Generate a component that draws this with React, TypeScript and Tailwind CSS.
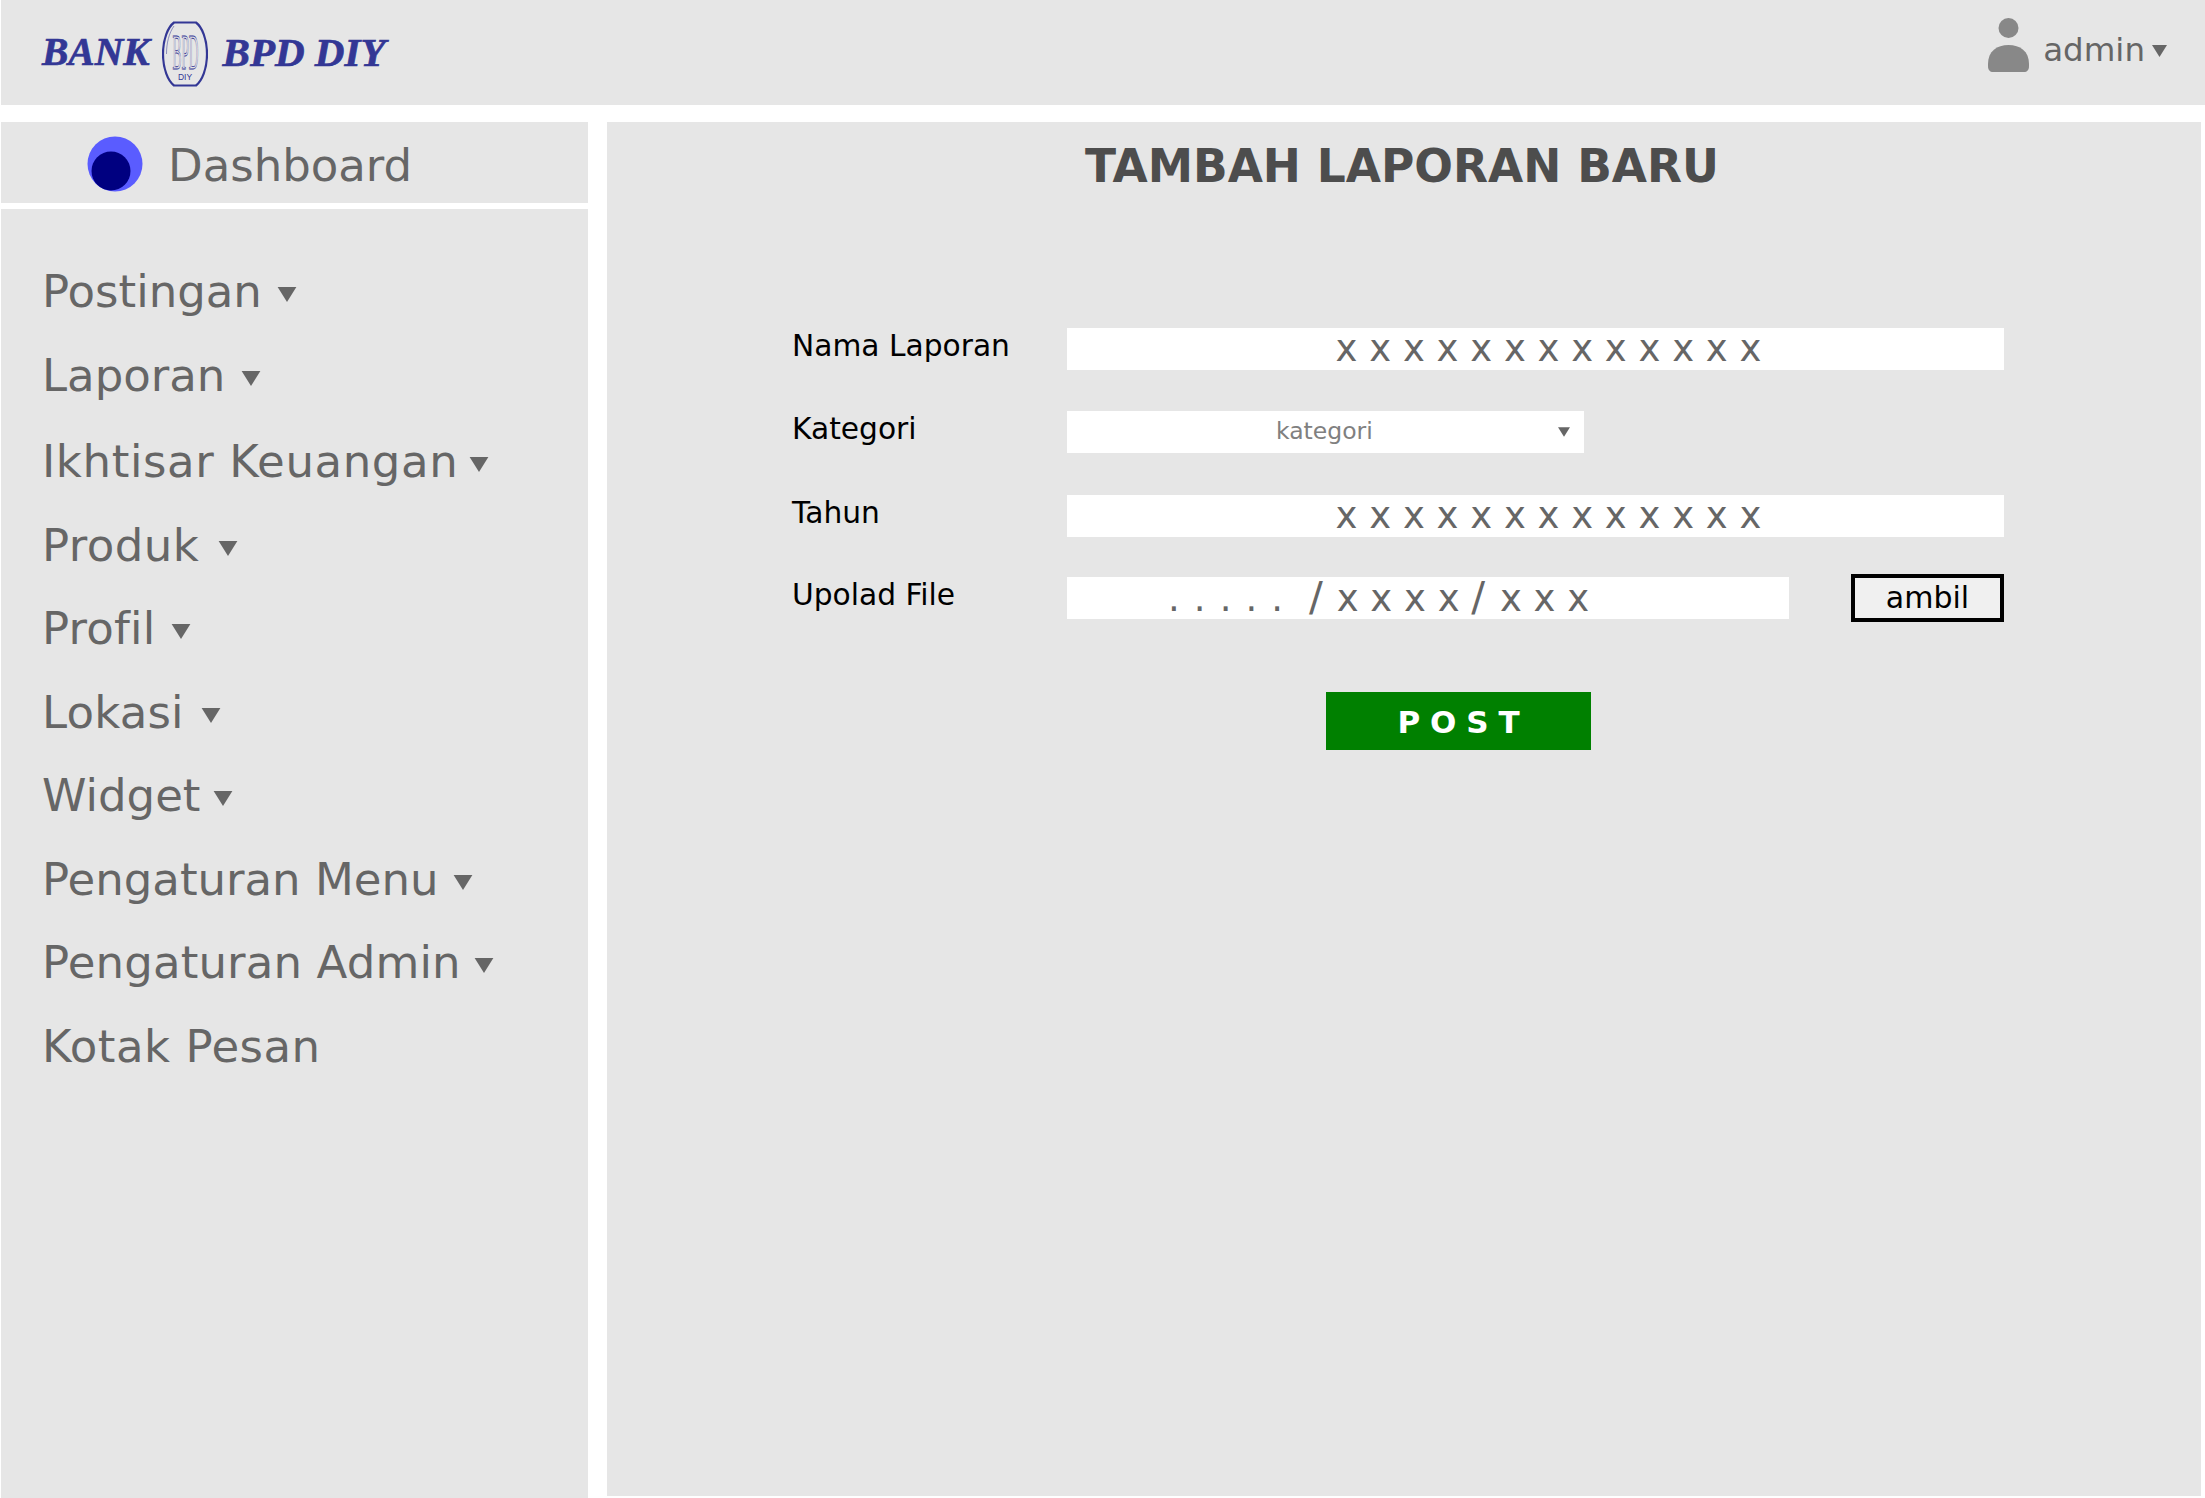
import React from "react";

const Caret = ({ className = "" }: { className?: string }) => (
  <svg viewBox="0 0 20 16" className={className} fill="#666666"><path d="M0 0H20L10 16Z" /></svg>
);

const Logo = () => (
  <svg width="46" height="66" viewBox="0 0 46 66" className="shrink-0 not-italic">
    <path d="M12 1.500H34C40 6 45 18 45 33C45 48 40 60 34 64.500H12C6 60 1 48 1 33C1 18 6 6 12 1.500Z" fill="none" stroke="#333795" strokeWidth="2.200" />
    <path d="M4.500 33C4.500 22 7 12 12 5" fill="none" stroke="#333795" strokeWidth="0.500" />
    <text x="10.500" y="48" fontSize="50" textLength="26" lengthAdjust="spacingAndGlyphs" fill="none" stroke="#333795" strokeWidth="0.800" fontFamily="'Liberation Serif', serif" fontWeight="400" fontStyle="normal">BPD</text>
    <text x="23" y="58.500" fontSize="8.500" textAnchor="middle" fill="#333795" fontFamily="'Liberation Sans', sans-serif" fontWeight="400" fontStyle="normal">DIY</text>
  </svg>
);

const menu: { label: string; caret: boolean; gap: string; cls?: string }[] = [
  { label: "Postingan", caret: true, gap: "ml-[15px]" },
  { label: "Laporan", caret: true, gap: "ml-[16px]" },
  { label: "Ikhtisar Keuangan", caret: true, gap: "ml-[11px]", cls: "mt-[3px] tracking-[0.600px]" },
  { label: "Produk", caret: true, gap: "ml-[19px]", cls: "tracking-[0.450px]" },
  { label: "Profil", caret: true, gap: "ml-[16px]", cls: "tracking-[0.200px]" },
  { label: "Lokasi", caret: true, gap: "ml-[17px]", cls: "tracking-[0.200px]" },
  { label: "Widget", caret: true, gap: "ml-[13px]" },
  { label: "Pengaturan Menu", caret: true, gap: "ml-[14px]" },
  { label: "Pengaturan Admin", caret: true, gap: "ml-[13px]", cls: "tracking-[0.150px]" },
  { label: "Kotak Pesan", caret: false, gap: "", cls: "tracking-[0.500px]" },
];

const X13 = "x x x x x x x x x x x x x";

const Label = ({ children }: { children: React.ReactNode }) => (
  <div className="w-[275px] shrink-0 text-[29.700px] leading-[36px] text-black -mt-[6px]">{children}</div>
);

export default function App() {
  return (
    <div className="w-[2205px] h-[1498px] overflow-hidden bg-white pl-px flex flex-col font-['DejaVu_Sans',sans-serif]">
      <header className="h-[105px] shrink-0 bg-[#e6e6e6] flex items-center justify-between pl-[41px] pr-[38px]">
        <div className="flex items-center font-['Liberation_Serif',serif] font-bold italic text-[#333795] leading-none">
          <span className="text-[39.500px] [-webkit-text-stroke:0.700px_#333795]">BANK</span>
          <span className="ml-[12px] mr-[15px] mt-[2px] flex"><Logo /></span>
          <span className="text-[41px] [-webkit-text-stroke:0.700px_#333795]">BPD DIY</span>
        </div>
        <div className="flex items-center text-[#666666] -mt-[5px]">
          <svg width="41" height="54" viewBox="0 0 41 54" fill="#888888" className="mr-[14px] -mt-[10px]">
            <circle cx="20.500" cy="10" r="10" />
            <path d="M0 46C0 33 9 27 20.500 27C32 27 41 33 41 46V48C41 52 39 54 36 54H5C2 54 0 52 0 48Z" />
          </svg>
          <span className="text-[32.500px] leading-none">admin</span>
          <Caret className="w-[15px] h-[12px] ml-[7px] mt-[2px]" />
        </div>
      </header>

      <div className="flex-1 flex mt-[17px] min-h-0">
        <aside className="w-[587px] shrink-0 flex flex-col gap-[6px]">
          <div className="h-[81px] shrink-0 bg-[#e6e6e6] flex items-center pl-[86px]">
            <svg width="56" height="56" viewBox="0 0 56 56" className="shrink-0 mt-[3px]">
              <circle cx="28" cy="28" r="27.500" fill="#5a5cff" />
              <circle cx="24" cy="35" r="19.500" fill="#000080" />
            </svg>
            <span className="ml-[25px] text-[45px] leading-none text-[#666666] mt-[6px]">Dashboard</span>
          </div>
          <nav className="flex-1 bg-[#e6e6e6] pt-[41px] pl-[41px] text-[45px] leading-none text-[#666666]">
            {menu.map((m) => (
              <div key={m.label} className={`h-[83.500px] flex items-center ${m.cls ?? ""}`}>
                <span>{m.label}</span>
                {m.caret && <Caret className={`w-[20px] h-[15px] mt-[6px] ${m.gap}`} />}
              </div>
            ))}
          </nav>
        </aside>

        <main className="ml-[19px] w-[1594px] h-[1374px] bg-[#e6e6e6] flex flex-col">
          <h1 className="mt-[18px] text-center text-[45.500px] leading-[54px] font-bold text-[#4d4d4d] pr-[4px]">TAMBAH LAPORAN BARU</h1>
          <form className="pt-[134px] pl-[185px] flex flex-col">
            <div className="flex items-center h-[42px]">
              <Label>Nama Laporan</Label>
              <div className="w-[937px] h-[42px] bg-white flex items-center justify-center pl-[26px] pb-[2px] text-[37px] leading-none text-[#666666]">{X13}</div>
            </div>
            <div className="flex items-center h-[42px] mt-[41px]">
              <Label>Kategori</Label>
              <div className="w-[517px] h-[42px] bg-white flex items-center pl-[209px] pr-[14px] justify-between text-[23.500px] leading-none text-[#808080]">
                <span>kategori</span>
                <Caret className="w-[12px] h-[10px]" />
              </div>
            </div>
            <div className="flex items-center h-[42px] mt-[42px]">
              <Label>Tahun</Label>
              <div className="w-[937px] h-[42px] bg-white flex items-center justify-center pl-[26px] pb-[2px] text-[37px] leading-none text-[#666666]">{X13}</div>
            </div>
            <div className="flex items-center h-[42px] mt-[40px]">
              <Label>Upolad File</Label>
              <div className="w-[722px] h-[42px] bg-white pl-[101px] text-[37px] leading-[40px] text-[#666666] whitespace-pre">
                <span className="[word-spacing:2.300px]">. . . . .</span>
                <span>{"  "}</span>
                <span className="text-[41px] ml-[2.500px] mr-[2px]">/</span>
                <span>{" x x x x "}</span>
                <span className="text-[41px] mr-[3px]">/</span>
                <span>{" x x x"}</span>
              </div>
              <button type="button" className="ml-[62px] w-[153px] h-[48px] border-[4px] border-black bg-[#f0f0f0] text-[30px] leading-none text-black flex items-center justify-center">ambil</button>
            </div>
            <div className="pl-[534px] pt-[73px] flex">
              <button type="button" className="w-[265px] h-[58px] bg-[#008000] text-white font-bold text-[31px] leading-none tracking-[0.32em] pl-[10px] pt-[3px] flex items-center justify-center">POST</button>
            </div>
          </form>
        </main>
      </div>
    </div>
  );
}
